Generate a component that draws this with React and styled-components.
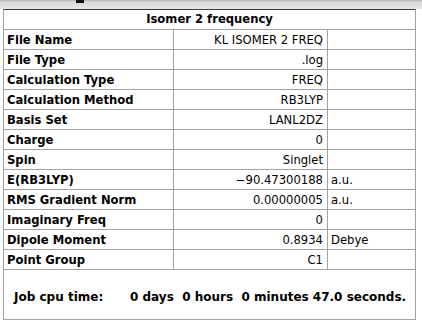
import React from "react";
import styled, { createGlobalStyle } from "styled-components";

const Global = createGlobalStyle`
  html, body { margin: 0; padding: 0; background: #ffffff; }
  body { font-family: "DejaVu Sans", "Liberation Sans", sans-serif; color: #000; }
`;

const Chrome = styled.div`
  height: 9px;
  background: linear-gradient(#b9b9b9 0px, #d8d8d8 2px, #e6e6e6 9px);
  position: relative;
`;

const ChromeMark = styled.div`
  position: absolute;
  left: 76px;
  top: 0;
  width: 8px;
  height: 3px;
  background: #111;
`;

const Sheet = styled.div`
  margin-left: 3px;
  width: 411px;
  border-left: 1px solid #a3a3a3;
  border-right: 1px solid #a3a3a3;
  border-top: 1px solid #3c3c3c;
  background: #fff;
`;

const Title = styled.div`
  height: 19px;
  line-height: 19px;
  border-bottom: 1px solid #a3a3a3;
  text-align: center;
  font-weight: bold;
  font-size: 11.6px;
`;

const Row = styled.div`
  display: grid;
  grid-template-columns: 170px 154px 1fr;
  height: 19px;
  border-bottom: 1px solid #a3a3a3;
`;

const Cell = styled.div`
  font-size: 11.6px;
  line-height: 20px;
  white-space: nowrap;
  overflow: hidden;
  border-right: ${(p) => (p.$last ? "none" : "1px solid #a3a3a3")};
  text-align: ${(p) => p.$align || "left"};
  font-weight: ${(p) => (p.$bold ? "bold" : "normal")};
  padding: ${(p) => (p.$align === "right" ? "0 4px 0 0" : "0 0 0 3px")};
`;

const Footer = styled.div`
  height: 50px;
  border-bottom: 1px solid #a3a3a3;
  display: flex;
  align-items: center;
  padding: 4px 0 0 10px;
  box-sizing: border-box;
  font-size: 12px;
  font-weight: bold;
  white-space: nowrap;
`;

const FooterLabel = styled.span`
  width: 116px;
`;

const rows = [
  ["File Name", "KL ISOMER 2 FREQ", ""],
  ["File Type", ".log", ""],
  ["Calculation Type", "FREQ", ""],
  ["Calculation Method", "RB3LYP", ""],
  ["Basis Set", "LANL2DZ", ""],
  ["Charge", "0", ""],
  ["Spin", "Singlet", ""],
  ["E(RB3LYP)", "\u221290.47300188", "a.u."],
  ["RMS Gradient Norm", "0.00000005", "a.u."],
  ["Imaginary Freq", "0", ""],
  ["Dipole Moment", "0.8934", "Debye"],
  ["Point Group", "C1", ""],
];

export default function App() {
  return (
    <>
      <Global />
      <Chrome>
        <ChromeMark />
      </Chrome>
      <Sheet>
        <Title>Isomer 2 frequency</Title>
        {rows.map(([label, value, unit]) => (
          <Row key={label}>
            <Cell $bold>{label}</Cell>
            <Cell $align="right">{value}</Cell>
            <Cell $last>{unit}</Cell>
          </Row>
        ))}
        <Footer>
          <FooterLabel>Job cpu time:</FooterLabel>
          <span>0 days&nbsp; 0 hours&nbsp; 0 minutes 47.0 seconds.</span>
        </Footer>
      </Sheet>
    </>
  );
}
